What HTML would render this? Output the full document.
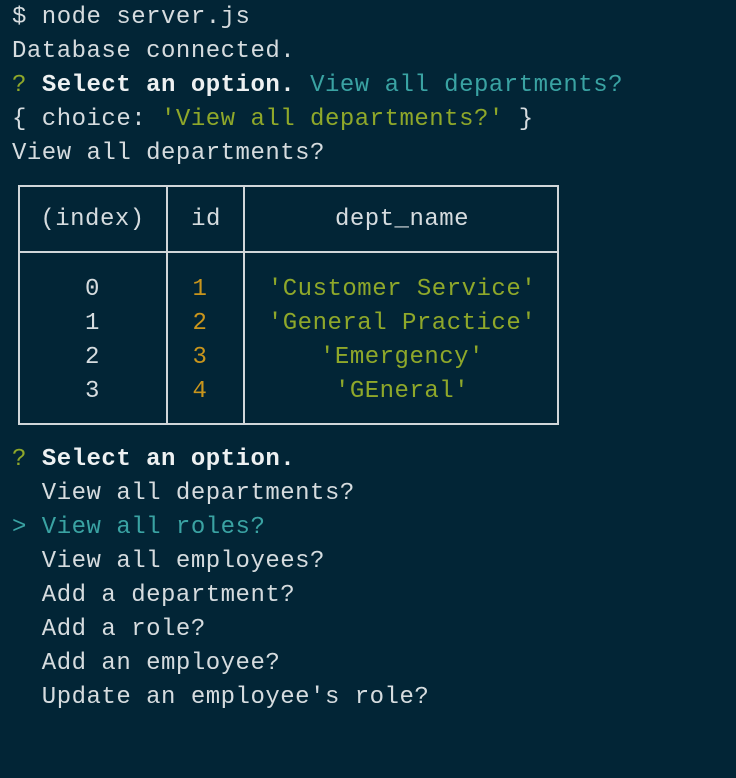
<!DOCTYPE html>
<html><head><style>
html,body{margin:0;padding:0;background:#022536;width:736px;height:778px;overflow:hidden}
.t{position:absolute;left:12px;font-family:"Liberation Mono",monospace;font-size:24px;letter-spacing:0.5px;line-height:34px;white-space:pre;color:#d6dcdf}
.b{font-weight:bold;color:#eef1f2}
.g{color:#8fa82a}
.c{color:#3aa3a3}
.box{position:absolute;left:18px;top:185px;width:537px;height:236px;border:2px solid #d0d6d9}
.hl{position:absolute;left:18px;top:251px;width:541px;height:2px;background:#d0d6d9}
.vl{position:absolute;top:185px;width:2px;height:238px;background:#d0d6d9}
.cc{position:absolute;text-align:center;font-family:"Liberation Mono",monospace;font-size:24px;letter-spacing:0.5px;line-height:34px;white-space:pre;color:#d6dcdf}
</style></head><body>
<div class="t" style="top:1px">$ node server.js</div>
<div class="t" style="top:35px">Database connected.</div>
<div class="t" style="top:69px"><span class="g">?</span> <span class="b">Select an option.</span> <span class="c">View all departments?</span></div>
<div class="t" style="top:103px">{ choice: <span class="g">'View all departments?'</span> }</div>
<div class="t" style="top:137px">View all departments?</div>

<div class="box"></div>
<div class="hl"></div>
<div class="vl" style="left:166px"></div>
<div class="vl" style="left:243px"></div>
<div class="cc" style="left:18px;width:149px;top:203px">(index)</div>
<div class="cc" style="left:168px;width:76px;top:203px">id</div>
<div class="cc" style="left:245px;width:314px;top:203px">dept_name</div>
<div class="cc" style="left:18px;width:149px;top:273px">0
1
2
3</div>
<div class="cc" style="left:168px;width:64px;top:273px;color:#c9951c">1
2
3
4</div>
<div class="cc" style="left:245px;width:314px;top:273px;color:#8fa82a">'Customer Service'
'General Practice'
'Emergency'
'GEneral'</div>

<div class="t" style="top:443px"><span class="g">?</span> <span class="b">Select an option.</span>
  View all departments?
<span class="c">&gt; View all roles?</span>
  View all employees?
  Add a department?
  Add a role?
  Add an employee?
  Update an employee's role?</div>
</body></html>
